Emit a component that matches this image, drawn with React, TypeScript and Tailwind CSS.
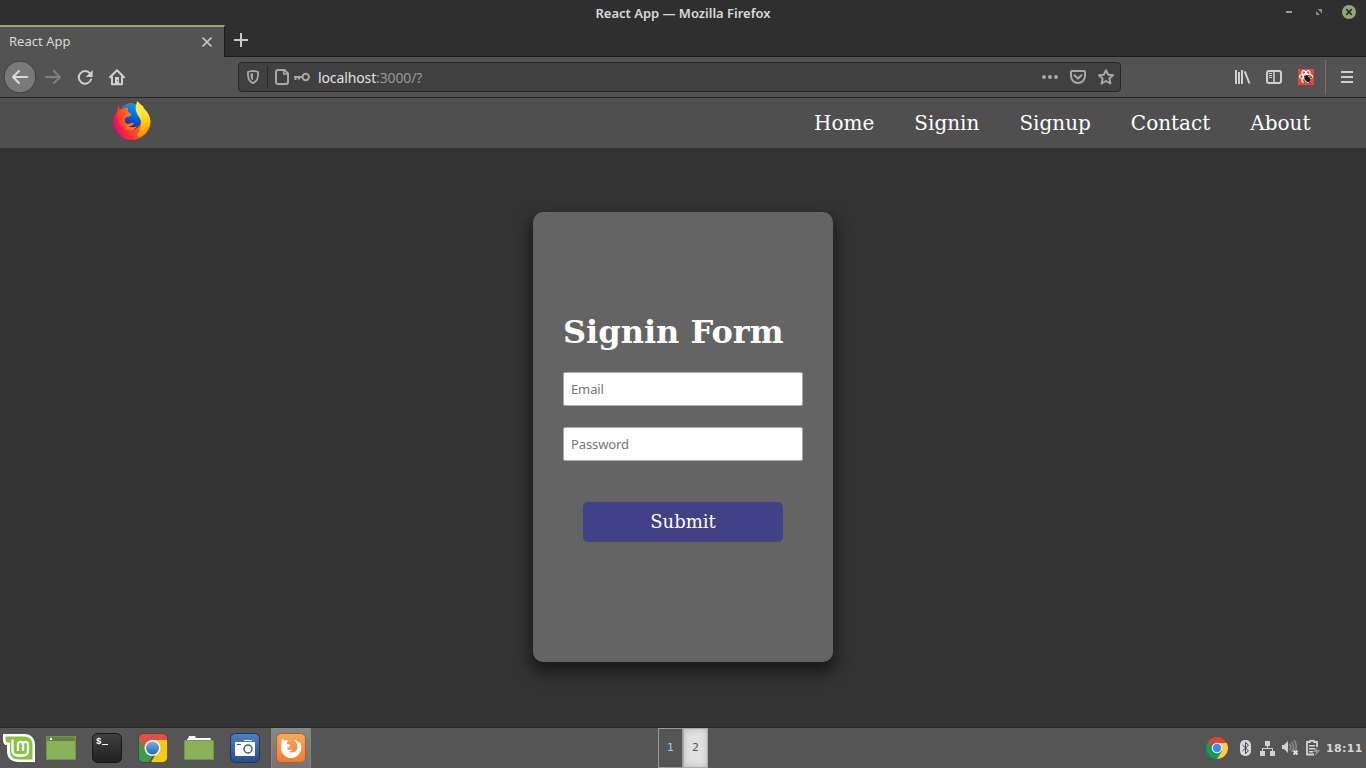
import React from "react";

const ui = "font-['Noto_Sans','Open_Sans',sans-serif]";
const serif = "font-['DejaVu_Serif',serif]";

function WindowTitle() {
  return (
    <div className="flex h-[25px] items-center justify-between bg-[#2f2f2f]">
      <div className="w-[90px]" />
      <div className={`${ui} pt-px text-[13px] leading-[18px] font-semibold tracking-[-0.01px] text-[#dadada]`}>
        React App — Mozilla Firefox
      </div>
      <svg width="90" height="25" viewBox="0 0 90 25">
        <path d="M10 11h6v2h-6z" fill="#9b9b9b" />
        <path d="M41.500 9H46v4.500zM40 11v4h4z" fill="#8b8b8b" />
        <circle cx="73" cy="12" r="7" fill="#92a977" />
        <path d="M70.200 9.200l5.600 5.600m0-5.600l-5.600 5.600" stroke="#2f2f2f" strokeWidth="1.800" />
      </svg>
    </div>
  );
}

function TabStrip() {
  return (
    <div className="flex h-8 bg-[#2f2f2f]">
      <div className="flex h-8 w-[225px] items-center justify-between border-t-2 border-r border-t-[#92a977] border-r-[#1c1c1c] bg-[#535353] pr-[11px] pl-[9px]">
        <span className={`${ui} pb-0.5 text-[13px] leading-4 tracking-[0.02px] text-[#dadada]`}>React App</span>
        <svg className="mb-px" width="12" height="12" viewBox="0 0 12 12">
          <path d="M1.500 1.500l9 9m0-9l-9 9" stroke="#c6c6c6" strokeWidth="1.700" />
        </svg>
      </div>
      <div className="flex flex-1 items-start border-b border-[#1c1c1c] pt-2 pl-[9px]">
        <svg width="14" height="14" viewBox="0 0 14 14">
          <path d="M7 0v14M0 7h14" stroke="#cdc7c7" strokeWidth="2" />
        </svg>
      </div>
    </div>
  );
}

function Toolbar() {
  return (
    <div className="flex h-[41px] items-center border-b border-[#292929] bg-[#535353]">
      <svg width="238" height="40" viewBox="0 57 238 40" fill="none" strokeLinecap="round" strokeLinejoin="round">
        <circle cx="20" cy="77" r="16" fill="#797979" stroke="#3d3d3d" />
        <path d="M27.200 77H13m6-6l-6 6 6 6" stroke="#dadada" strokeWidth="2" />
        <path d="M46 77h14m-6-6l6 6-6 6" stroke="#808080" strokeWidth="2" />
        <path d="M90 73.500A6.300 6.300 0 1 0 91 79.500" stroke="#d0d0d0" strokeWidth="2" />
        <path d="M92.700 70v7h-7z" fill="#d0d0d0" />
        <path d="M110 77.200l7-7 7 7M112 77v7.300h10V77" stroke="#d0d0d0" strokeWidth="2" />
        <path d="M115 84v-7h4v7z" fill="#d0d0d0" />
        <path d="M117 80h1v1h-1z" fill="#535353" />
      </svg>
      <div className="flex h-[30px] w-[883px] items-center rounded-[4px] border border-[#252525] bg-[#404040]">
        <svg width="79" height="28" viewBox="239 63 79 28" fill="none" stroke="#a8a8a8">
          <path d="M253 70.800c-2 .1-3.500.4-5.100 1.200 0 5.600.4 9 5.100 11.100 4.700-2.100 5.100-5.500 5.100-11.100-1.600-.8-3.100-1.100-5.100-1.200z" strokeWidth="1.800" strokeLinejoin="round" />
          <path d="M253 73.200v7.300c-2-1.200-2.600-3-2.600-6.700z" fill="#a8a8a8" stroke="none" />
          <path d="M267.500 66v22" stroke="#2b2b2b" />
          <path d="M278 70h6.500l3.500 3.500V82a2 2 0 0 1-2 2h-8a2 2 0 0 1-2-2V72a2 2 0 0 1 2-2z" strokeWidth="2" />
          <path d="M283.700 70v4h4" strokeWidth="1.500" />
          <circle cx="305.700" cy="77" r="3.200" strokeWidth="2" />
          <path d="M302.500 77H294m1.500 0v3m3.500-3v2.400" strokeWidth="2" />
        </svg>
        <span className={`${ui} pt-px text-[14px] leading-[18px] tracking-[-0.12px] text-[#e2e2e2]`}>
          localhost<span className="text-[#999999]">:3000/?</span>
        </span>
        <svg className="ml-auto" width="80" height="28" viewBox="1040 63 80 28" fill="none" stroke="#a8a8a8" strokeLinejoin="round" strokeLinecap="round">
          <g fill="#a8a8a8" stroke="none">
            <circle cx="1044" cy="77" r="2" />
            <circle cx="1050" cy="77" r="2" />
            <circle cx="1056" cy="77" r="2" />
          </g>
          <path d="M1072 71h12a1 1 0 0 1 1 1v4a7 7 0 0 1-14 0v-4a1 1 0 0 1 1-1z" strokeWidth="2" />
          <path d="M1074.500 75.300l3.500 3.300 3.500-3.300" strokeWidth="2" />
          <path d="M1106 70.200l2.100 4.500 5 .6-3.700 3.300 1 4.900-4.400-2.500-4.400 2.500 1-4.900-3.700-3.300 5-.6z" strokeWidth="2" />
        </svg>
      </div>
      <svg className="ml-auto" width="136" height="40" viewBox="1230 57 136 40" fill="none" stroke="#d0d0d0">
        <path d="M1236 70v14M1239 72v12M1242 70v14" strokeWidth="2" />
        <path d="M1244.700 71.300l4.800 12.200" strokeWidth="2" />
        <rect x="1267" y="71" width="14" height="12" rx="2" strokeWidth="2" />
        <path d="M1274 71v12" strokeWidth="1.500" />
        <path d="M1269 73.500h3m-3 2h3m-3 2h3" />
        <rect x="1298" y="69" width="16" height="16" fill="#d94b3b" stroke="none" />
        <g stroke="#fff" strokeWidth="1.100">
          <ellipse cx="1306" cy="76.500" rx="6.500" ry="2.400" />
          <ellipse cx="1306" cy="76.500" rx="6.500" ry="2.400" transform="rotate(60 1306 76.500)" />
          <ellipse cx="1306" cy="76.500" rx="6.500" ry="2.400" transform="rotate(120 1306 76.500)" />
        </g>
        <ellipse cx="1307.500" cy="79" rx="3.400" ry="2.600" transform="rotate(45 1307.500 79)" fill="#201c1c" stroke="none" />
        <path d="M1304 77l6-2m-5 6l-1 2m5-1l1.500 1.500m0-6h1.500" stroke="#201c1c" strokeWidth=".8" />
        <path d="M1325.500 60v34" stroke="#737373" />
        <path d="M1341 72h12m-12 5h12m-12 5h12" strokeWidth="2" />
      </svg>
    </div>
  );
}

function FirefoxLogo() {
  return (
    <svg width="38" height="39" viewBox="0 0 114 117">
      <defs>
        <linearGradient id="ff-body" x1="0" y1=".7" x2="1" y2=".35">
          <stop offset="0" stopColor="#e6007f" />
          <stop offset=".25" stopColor="#ff2440" />
          <stop offset=".6" stopColor="#ff5a1c" />
          <stop offset="1" stopColor="#ffb300" />
        </linearGradient>
        <linearGradient id="ff-globe" x1=".7" y1="0" x2=".4" y2="1">
          <stop offset="0" stopColor="#00a0ff" />
          <stop offset=".5" stopColor="#0564e0" />
          <stop offset="1" stopColor="#33117a" />
        </linearGradient>
        <linearGradient id="ff-head" x1="0" y1=".5" x2="1" y2=".3">
          <stop offset="0" stopColor="#ff3038" />
          <stop offset=".6" stopColor="#ff7714" />
          <stop offset="1" stopColor="#ff9a0a" />
        </linearGradient>
        <linearGradient id="ff-tail" x1=".3" y1="0" x2=".5" y2="1">
          <stop offset="0" stopColor="#fff44f" />
          <stop offset=".45" stopColor="#ffe22e" />
          <stop offset=".75" stopColor="#ffb60a" />
          <stop offset="1" stopColor="#ff8210" />
        </linearGradient>
      </defs>
      <path d="M15 12l7 13C32 12 44 7 57 7l14 5C90 17 112 40 112 62a55 54 0 0 1-111 0C1 46 7 36 14 29z" fill="url(#ff-body)" />
      <path d="M26 22C35 11 47 8 60 8c9 2 9 12 13 26 14 18 14 34 2 45-10 10-29 9-38 0C26 70 28 44 26 22z" fill="url(#ff-globe)" />
      <path d="M14 28c9-1 13-5 24-7 6-2 9-1 7 4l-1 6 11 8-3 6-12 4c-6 5-7 11-1 18 7 4 13-3 23-1 0 8-8 8-15 10 8 5 18 3 26-2-9 17-31 18-43 6C18 72 9 50 14 28z" fill="url(#ff-head)" />
      <path d="M73 0c7 8 10 12 17 15l2 6c18 17 25 36 17 57-6 15-18 26-32 31-10-10 7-19 8-43 0-12-10-20-15-33-4-11-1-21 3-33z" fill="url(#ff-tail)" />
    </svg>
  );
}

function SiteNav() {
  return (
    <nav className="flex h-[50px] items-center bg-[#4f4f4f] pr-[55.5px] pl-[113px]">
      <div className="self-start pt-[3px]">
        <FirefoxLogo />
      </div>
      <ul className={`${serif} ml-auto flex gap-10 text-[20px] leading-6 text-white`}>
        <li>Home</li>
        <li>Signin</li>
        <li>Signup</li>
        <li>Contact</li>
        <li>About</li>
      </ul>
    </nav>
  );
}

function SigninForm() {
  const field = `${ui} block h-[34px] w-60 rounded-[2px] border border-[#a9a9a9] bg-white px-[7px] text-[13px] tracking-[-0.12px] outline-none placeholder:text-[#757575]`;
  return (
    <main className="flex h-[580px] justify-center bg-[#333333] pt-16">
      <form className={`${serif} flex h-[450px] w-[300px] flex-col rounded-[10px] bg-[#646464] px-[30px] pt-[101px] shadow-[0_8px_16px_2px_rgba(0,0,0,0.55)]`}>
        <h1 className="text-[32px] leading-[38px] font-bold whitespace-nowrap text-white">Signin Form</h1>
        <input className={`${field} mt-[21px]`} placeholder="Email" />
        <input className={`${field} mt-[21px]`} placeholder="Password" />
        <button type="button" className="mt-[41px] h-10 w-[200px] self-center rounded-[5px] bg-[#414187] text-[18px] leading-6 text-white">
          Submit
        </button>
      </form>
    </main>
  );
}

function MintIcon() {
  return (
    <svg width="32" height="28" viewBox="0 0 32 28">
      <path d="M0 0h21c7 0 11 4 11 11v17H16C8 28 4 24 4 17v-6C1 11 0 9 0 5z" fill="#fff" />
      <path d="M2.500 2.500H21c5.500 0 8.500 3 8.500 8.500v14.500H16c-6 0-9-3-9-9V8.500H5C3 8.500 2.500 7 2.500 4z" fill="#86c440" />
      <path d="M9.500 5.500V16c0 3.500 2 5.500 5.500 5.500h5c3.500 0 5-2 5-5V10.500c0-3-4-3.500-5-1-1-2.500-5-2-5 1V17m5-7v7" fill="none" stroke="#fff" strokeWidth="2.300" strokeLinejoin="round" />
    </svg>
  );
}

function ChromeDisc() {
  return (
    <g>
      <path d="M11 11L1.500 5.500A11 11 0 0 1 20.500 5.500z" fill="#db4437" />
      <path d="M11 11L1.500 5.500A11 11 0 0 0 11 22l5-8z" fill="#0f9d58" />
      <path d="M11 6h9.800A11 11 0 0 1 11 22l5-8z" fill="#ffcd40" />
      <circle cx="11" cy="11" r="5.300" fill="#f1f1f1" />
      <circle cx="11" cy="11" r="4.200" fill="#4285f4" />
    </g>
  );
}

function Launchers() {
  return (
    <div className="flex h-10 items-center pl-[3px]">
      <MintIcon />
      <svg className="ml-[11px]" width="30" height="24" viewBox="0 0 30 24">
        <path d="M0 0h30v24H0z" fill="#70954a" />
        <path d="M1 5h28v18H1z" fill="#8bb158" />
        <path d="M1 1h28v4H1z" fill="#658442" />
        <path d="M4 2h2v2H4z" fill="#fff" />
      </svg>
      <svg className="ml-4" width="30" height="30" viewBox="0 0 30 30">
        <defs>
          <linearGradient id="term" x2="0" y2="1">
            <stop stopColor="#414141" />
            <stop offset="1" stopColor="#202020" />
          </linearGradient>
        </defs>
        <rect x=".5" y=".5" width="29" height="29" rx="5" fill="url(#term)" stroke="#171717" />
        <text x="4" y="10.500" fill="#fff" fontSize="9" fontWeight="bold" fontFamily="Liberation Mono">$</text>
        <path d="M10 11h6v1h-6z" fill="#fff" />
      </svg>
      <svg className="ml-4" width="30" height="30" viewBox="0 0 30 30">
        <defs>
          <clipPath id="chrome-tile"><rect x=".5" y=".5" width="29" height="29" rx="5" /></clipPath>
          <linearGradient id="chrome-blue" x2="0" y2="1">
            <stop stopColor="#75b2e5" />
            <stop offset="1" stopColor="#2466ac" />
          </linearGradient>
        </defs>
        <g clipPath="url(#chrome-tile)">
          <path d="M0 0h30v8H15L8 18 0 8z" fill="#df5145" />
          <path d="M0 5l9 14 6 3-5 8H0z" fill="#3f9b4b" />
          <path d="M15 7h15v23H15l-2-1 8-13z" fill="#f6c917" />
        </g>
        <circle cx="14.500" cy="15" r="8" fill="#f4f4f4" />
        <circle cx="14.500" cy="15" r="6.500" fill="url(#chrome-blue)" />
        <rect x=".5" y=".5" width="29" height="29" rx="5" fill="none" stroke="#303030" strokeOpacity=".5" />
      </svg>
      <svg className="ml-4" width="30" height="24" viewBox="0 0 30 24">
        <path d="M3 5V3h1l1-3h6l1 2h14l1 1v2z" fill="#fff" />
        <path d="M0 5l1-1h28l1 1v19H0z" fill="#70954a" />
        <path d="M1 5h28v18H1z" fill="#8bb158" />
      </svg>
      <svg className="ml-4" width="30" height="30" viewBox="0 0 30 30">
        <defs>
          <linearGradient id="camera" x2="0" y2="1">
            <stop stopColor="#5280bd" />
            <stop offset="1" stopColor="#244e88" />
          </linearGradient>
        </defs>
        <rect x=".5" y=".5" width="29" height="29" rx="5" fill="url(#camera)" stroke="#1d365d" />
        <path d="M14 7h8v1h-8zM6 9h18a1 1 0 0 1 1 1v12a1 1 0 0 1-1 1H6a1 1 0 0 1-1-1V10a1 1 0 0 1 1-1z" fill="#fff" />
        <path d="M7 11h4v1H7z" fill="#315c98" />
        <circle cx="18" cy="16" r="4" fill="#fff" stroke="#315c98" strokeWidth="1.500" />
      </svg>
      <div className="ml-[11px] flex h-10 w-10 items-center justify-center border-x border-[#858585] bg-linear-to-b from-[#898989] to-[#747474]">
        <svg width="30" height="30" viewBox="0 0 30 30">
          <defs>
            <linearGradient id="fox-tile" x2="0" y2="1">
              <stop stopColor="#faa95a" />
              <stop offset="1" stopColor="#f27a31" />
            </linearGradient>
          </defs>
          <rect x=".5" y=".5" width="29" height="29" rx="5" fill="url(#fox-tile)" stroke="#aa632f" />
          <path d="M6.500 5.500c1 2 3 2 6 2-1 1-2 2-2 3l4 1.500-1 2-2.500 1c.5 2 3 2 5.500 1.500-1 2-3 2-4 2 3 2 7 1 8.500-2 1.500-4-.5-7-3-10 3 1 4 2 5 4l.5-2c3 5 2 9 0 12-4 6-12 6-16 1-3-3-3-7-2-11 0-2 0-3 1-5z" fill="#fff" />
        </svg>
      </div>
    </div>
  );
}

function Tray() {
  return (
    <div className="flex h-10 w-40 items-center">
      <svg width="22" height="22" viewBox="0 0 22 22"><ChromeDisc /></svg>
      <svg className="ml-3" width="11" height="16" viewBox="0 0 11 16">
        <rect width="11" height="16" rx="5" fill="#d5dbe2" />
        <path d="M2.500 5l6 5.800L5.500 13.500v-11l3 2.700-6 5.800" fill="none" stroke="#414141" />
      </svg>
      <svg className="ml-[9px]" width="15" height="15" viewBox="0 0 15 15" fill="#d2d2d2">
        <path d="M5 0h5v5H8v2h5v3h2v5h-5v-5h2V8H3v2h2v5H0v-5h2V7h5V5H5z" />
      </svg>
      <svg className="ml-[7px]" width="17" height="16" viewBox="0 0 17 16" fill="none">
        <path d="M0 5h2l4-4v12l-4-4H0z" fill="#d2d2d2" />
        <path d="M7.500 4q2.500 3 0 6m2-8q4 5 0 10m2.500-12q3.500 5 1.500 10" stroke="#8b8b8b" strokeWidth="1.500" />
        <path d="M11.500 10.500l4 4m0-4l-4 4" stroke="#e0e0e0" strokeWidth="1.800" />
      </svg>
      <svg className="ml-[7px]" width="15" height="16" viewBox="0 0 15 16" fill="none">
        <path d="M8 14.500H1V2h3V.8h4V2h3v5" stroke="#d2d2d2" strokeWidth="1.800" />
        <path d="M3 5h6v1.500H3zm0 3h6v1.500H3zm0 3h4v1.500H3z" fill="#d2d2d2" />
        <path d="M11 7l-4 5h3l-1 4 5-6h-3z" fill="#969696" />
      </svg>
      <span className="ml-[5px] pt-px font-['DejaVu_Sans',sans-serif] text-[11px] leading-4 font-bold tracking-[0.35px] text-[#d5d5d5]">18:11</span>
    </div>
  );
}

function Taskbar() {
  return (
    <footer className="grid h-10 grid-cols-[658px_50px_1fr] bg-[#555555] shadow-[0_-1px_0_#292929]">
      <Launchers />
      <div className="grid grid-cols-2 font-['DejaVu_Sans',sans-serif] text-[11px]">
        <div className="flex items-center justify-center border border-[#999999] pt-px text-[#a7cee4]">1</div>
        <div className="flex items-center justify-center border border-[#aaaaaa] bg-[#e1e1e1] pt-px text-[#555555] shadow-[inset_0_0_6px_#b7b7b7]">2</div>
      </div>
      <div className="flex justify-end">
        <Tray />
      </div>
    </footer>
  );
}

export default function App() {
  return (
    <div className="flex h-[768px] w-[1366px] flex-col overflow-hidden">
      <WindowTitle />
      <TabStrip />
      <Toolbar />
      <SiteNav />
      <SigninForm />
      <Taskbar />
    </div>
  );
}
